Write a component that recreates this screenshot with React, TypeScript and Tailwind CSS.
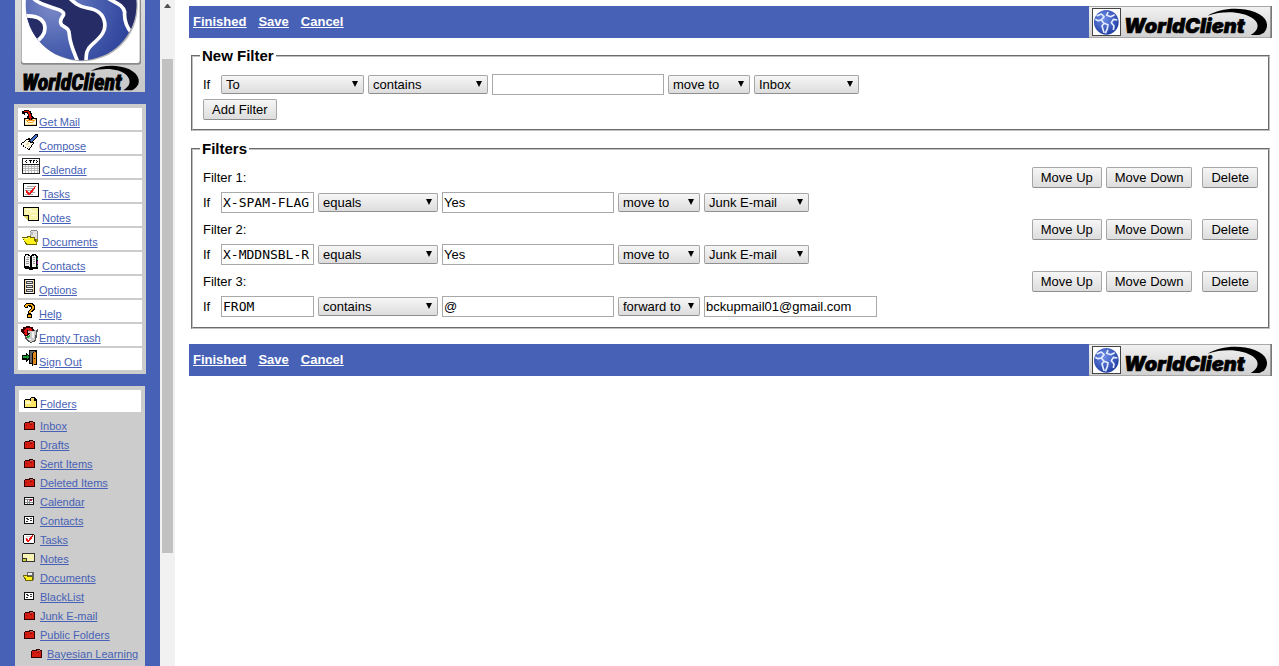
import type { ReactNode } from 'react';

const menuItems = [
  { label: 'Get Mail', icon: 'getmail' },
  { label: 'Compose', icon: 'compose' },
  { label: 'Calendar', icon: 'calendar', wide: true },
  { label: 'Tasks', icon: 'tasks', wide: true },
  { label: 'Notes', icon: 'notes', wide: true },
  { label: 'Documents', icon: 'documents', wide: true },
  { label: 'Contacts', icon: 'contacts', wide: true },
  { label: 'Options', icon: 'options' },
  { label: 'Help', icon: 'help' },
  { label: 'Empty Trash', icon: 'trash' },
  { label: 'Sign Out', icon: 'signout' },
];

const folders = [
  { label: 'Inbox', icon: 'red' },
  { label: 'Drafts', icon: 'red' },
  { label: 'Sent Items', icon: 'red' },
  { label: 'Deleted Items', icon: 'red' },
  { label: 'Calendar', icon: 'calendar' },
  { label: 'Contacts', icon: 'contacts' },
  { label: 'Tasks', icon: 'tasks' },
  { label: 'Notes', icon: 'notes' },
  { label: 'Documents', icon: 'documents' },
  { label: 'BlackList', icon: 'contacts' },
  { label: 'Junk E-mail', icon: 'red' },
  { label: 'Public Folders', icon: 'red' },
  { label: 'Bayesian Learning', icon: 'red', nested: true },
];

const filters = [
  { header: 'X-SPAM-FLAG', test: 'equals', value: 'Yes', action: 'move to', target: 'Junk E-mail' },
  { header: 'X-MDDNSBL-R', test: 'equals', value: 'Yes', action: 'move to', target: 'Junk E-mail' },
  { header: 'FROM', test: 'contains', value: '@', action: 'forward to', target: 'bckupmail01@gmail.com' },
];

const tests = ['contains', 'equals', 'does not contain'];
const actions = ['move to', 'forward to', 'delete'];
const mailFolders = ['Inbox', 'Drafts', 'Sent Items', 'Junk E-mail'];

// 16px menu icons, drawn on a pixel grid
const menuIcons: Record<string, ReactNode> = {
  getmail: (
    <>
      <path d="M3 8h13v8H3z" fill="#000" />
      <path d="M4 9h11v6H4z" fill="#fff8d8" />
      <path d="M4 14h11v1H4z" fill="#ffd890" />
      <path d="M4 9h1v1h1v1h1v1h5v-1h1v-1h1V9h1v1h-1v1h-1v1h-1v1H7v-1H6v-1H5v-1H4z" fill="#f0a830" />
      <path d="M1 1h2V0h5v1h2v2h1v3h1v1h1v2h-1v1h-1v1H9v-1H8V9H7V8H6V6h1V4H6V3H4v2H3V4H1z" fill="#000" />
      <path d="M3 1h5v1h1v2h1v3h1v1h-1v2H9V8H8V4H7V2H3z" fill="#e01000" />
      <path d="M7 9h1v1h3V9h1v1h1v2h-1v-1H7v1H6v-2h1z" fill="#ff9410" />
    </>
  ),
  compose: (
    <>
      <path d="M0 9h1V8h2V7h1V6h1V5h2V4h2v2h2v2h2v2h-1v1h-1v2h-1v1H9v2H7v-1H6v-1H4v-1H2v-2H0z" fill="#000" />
      <path d="M1 9h2V8h1V7h1V6h3v1h2v2h2v1h-1v1h-1v2H9v1H8v1H7v-1H5v-1H3v-2H1z" fill="#fffbe8" />
      <path d="M9 7V5h1V4h1V3h1V2h1V1h1V0h3v3h-1v1h-1v1h-1v1h-1v1h-1v1h-1v1H9V8H7V7z" fill="#000" />
      <path d="M10 6V5h1V4h1V3h1V2h1V1h2v2h-1v1h-1v1h-1v1h-1v1h-1v1h-1V7H9V6z" fill="#3f6fc4" />
      <path d="M6 9h2v1H6zM5 10h2v1H5zM7 12h2v1H7z" fill="#dcd3a0" />
    </>
  ),
  calendar: (
    <>
      <path d="M1 0h18v16H1z" fill="#222" />
      <path d="M2 1h16v5H2zM2 7h16v8H2z" fill="#fff" />
      <path
        d="M4 3h1v1H4zM5 2h1v1H5zM5 4h1v1H5zM8 2h3v1H8zM9 3h1v2H9zM12 2h1v3h-1zM13 2h1v1h-1zM15 2h1v1h-1zM16 3h1v1h-1zM15 4h1v1h-1z"
        fill="#000"
      />
      <path
        d="M2 8h16v1H2zM2 10h16v1H2zM2 12h16v1H2zM4 7h1v8H4zM7 7h1v8H7zM10 7h1v8h-1zM13 7h1v8h-1zM16 7h1v8h-1z"
        fill="#bbb"
      />
    </>
  ),
  tasks: (
    <>
      <path d="M2 1h16v14H2z" fill="#000" />
      <path d="M3 2h14v12H3z" fill="#fff" />
      <path d="M6 4h9v1H6zM4 6h8v1H4zM4 8h9v1H4zM5 10h9v1H5zM4 12h8v1H4z" fill="#aaa" />
      <path d="M5 8l3 4 7-8" fill="none" stroke="#f01818" strokeWidth="1" />
      <path d="M5 9l3 4 6-7" fill="none" stroke="#f01818" strokeWidth="1" />
    </>
  ),
  notes: (
    <>
      <path d="M2 1h16v14H7v-1H3v-1H2z" fill="#000" />
      <path d="M3 2h14v12H8V9H3z" fill="#f7f3a8" />
      <path d="M5 3h6v1H5zM9 5h6v1H9zM10 9h5v1h-5z" fill="#fffde0" />
      <path d="M3 10h4v4H6v-1H5v-1H4v-1H3z" fill="#dcd35a" />
      <path d="M2 10h1v1h1v1h1v1h1v2H2z" fill="#fff" />
    </>
  ),
  documents: (
    <>
      <path d="M9 1h1V0h6v1h1v9H9z" fill="#888" />
      <path d="M10 1h6v9h-6z" fill="#e2e2e2" />
      <path d="M9 2h3v3H9z" fill="#bcbcbc" />
      <path d="M1 7h5V6h4v1h4v2h2v5l-1 1H5L4 13z" fill="#6b6300" />
      <path d="M2 8h5V7h2v1h4v2l2 3v1H6l-2-2z" fill="#fff21c" />
      <path d="M3 8h4v1H4z" fill="#fffca8" />
      <path d="M15 9h2v3h-1v2h-1z" fill="#998a00" />
    </>
  ),
  contacts: (
    <>
      <path d="M4 0h4v1h1v1h1V1h1V0h4v1h1v1h1v13h-5v1H8v-1H4v-1H3V2h1z" fill="#000" />
      <path d="M4 2h1V1h2v1h2v11H8v-1H4zM11 2h2V1h1v1h1v11h-4z" fill="#f0f0f0" />
      <path d="M6 3h2v1H6zM5 5h3v1H5zM5 7h3v1H5zM5 9h3v1H5zM12 3h2v1h-2zM12 5h2v1h-2zM12 7h2v1h-2zM12 9h2v1h-2z" fill="#999" />
      <path d="M16 4h1v2h-1zM16 11h1v2h-1z" fill="#1b9a4b" />
      <path d="M16 7h1v3h-1z" fill="#9b1fa0" />
    </>
  ),
  options: (
    <>
      <path d="M3 1h11v15H3z" fill="#000" />
      <path d="M4 2h9v13H4z" fill="#f2d8a8" />
      <path d="M5 2h7v13H5z" fill="#fff" />
      <path d="M5 3h7v3H5zM5 7h7v3H5zM5 11h7v3H5z" fill="#444" />
      <path d="M6 4h5v1H6zM6 8h5v1H6zM6 12h5v1H6z" fill="#ddd" />
    </>
  ),
  help: (
    <>
      <path d="M5 1h7v1h1v1h1v5h-1v1h-1v1h-2v2h1v4H6v-4h1V9h1V8h1V7h1V5H8V4H7v2H4V5H3V3h1V2h1z" fill="#000" />
      <path d="M5 2h6v1h1v1h1v3h-1v1h-1v1h-1v2H8V9h1V8h1V7h1V4h-1V3H7v1H6v1H4V3h1z" fill="#ffae18" />
      <path d="M7 13h3v2H7z" fill="#ffae18" />
    </>
  ),
  trash: (
    <>
      <path d="M5 4h9l3-1-2 12-5 2-5-3L3 8z" fill="#555" />
      <path d="M6 5h7l2-1-1 10-4 2-4-3-1-5z" fill="#c9c9c9" />
      <path d="M11 6h2v6h-2zM7 13h3v1H7z" fill="#f4f4f4" />
      <path d="M0 3h2V1h3V0h4v1h3v2h1v2h-3V4H7v3h2v1H8v1H7v1H4V9H3V8H2V7H1V6H0z" fill="#300" />
      <path d="M2 5l3-3h4l2 2v1H9L6 4v4h1L5 9 2 7h2z" fill="#e41414" />
      <path d="M6 10h2v2H6zM8 9h1v2H8z" fill="#1aa83a" />
    </>
  ),
  signout: (
    <>
      <path d="M8 0h8v15h-4v1h-1v-2H8z" fill="#000" />
      <path d="M9 1h5v1h-2v1h-1v10H9z" fill="#666" />
      <path d="M12 3h1V2h2v12h-2v1h-1z" fill="#e08a1c" />
      <path d="M13 8h1v1h-1z" fill="#000" />
      <path d="M1 5h4V3h1v1h1v1h1v1h1v3H8v1H7v1H6v1H5v-2H1z" fill="#000" />
      <path d="M2 6h4V5h1v1h1v2H7v1H6V8H2z" fill="#1e9a2e" />
    </>
  ),
};

const folderIcons: Record<string, ReactNode> = {
  open: (
    <>
      <path d="M2 5h1V4h5V3h1V2h4v1h1v1h1v9H2z" fill="#000" />
      <path d="M3 5h5v1h6v6H3z" fill="#ffe566" />
      <path d="M3 6h6v3H3z" fill="#fff7b8" />
      <path d="M9 3h3v3H9z" fill="#ffd65c" />
    </>
  ),
  red: (
    <>
      <path d="M2 6h1V5h4V4h4v1h2v8H2z" fill="#300" />
      <path d="M3 6h9v6H3z" fill="#d41c10" />
      <path d="M8 5h3v1H8z" fill="#a86860" />
      <path d="M4 8h1v1H4zM8 7h2v1H8z" fill="#8c0c08" />
    </>
  ),
  calendar: (
    <>
      <path d="M2 4h10v8H2z" fill="#111" />
      <path d="M3 5h8v6H3z" fill="#fff" />
      <path d="M3 6h8v1H3zM3 9h8v1H3zM5 6h1v5H5zM7 6h1v5H7z" fill="#888" />
      <path d="M8 6h2v2H8z" fill="#a02040" />
    </>
  ),
  contacts: (
    <>
      <path d="M2 4h10v8H2z" fill="#111" />
      <path d="M3 5h8v6H3z" fill="#fff" />
      <path d="M4 6h2v1H4zM4 9h2v1H4zM5 7h2v1H5zM8 6h2v1H8zM8 8h2v1H8z" fill="#333" />
    </>
  ),
  tasks: (
    <>
      <path d="M2 3h10v1h1v8h-1v1H2v-1H1V4h1z" fill="#111" />
      <path d="M2 4h10v8H2z" fill="#fff" />
      <path d="M4 5h5v1H4zM3 7h3v1H3z" fill="#ccc" />
      <path d="M4 7l2 3 5-6" fill="none" stroke="#f01818" strokeWidth="1" />
      <path d="M4 8l2 3 5-6" fill="none" stroke="#f01818" strokeWidth="1" />
    </>
  ),
  notes: (
    <>
      <path d="M0 3h13v9H0z" fill="#333" />
      <path d="M1 4h11v7H5V8H1z" fill="#f6f3b4" />
      <path d="M1 9h3v2H1z" fill="#d8ce30" />
    </>
  ),
  documents: (
    <>
      <path d="M5 3h6l1 1v7H5z" fill="#666" />
      <path d="M6 4h4v2H6z" fill="#eee" />
      <path d="M1 6h5v1h4v1h1v4H3V10H2V8H1z" fill="#6b6300" />
      <path d="M2 7h3v1h5v3H4V9H3V8H2z" fill="#fff21c" />
    </>
  ),
};

function FolderIcon({ name }: { name: string }) {
  return (
    <svg width="18" height="16" viewBox="0 0 18 16" shapeRendering="crispEdges" className="shrink-0" aria-hidden="true">
      {folderIcons[name]}
    </svg>
  );
}

function SidebarLogo() {
  return (
    <svg width="130" height="92" viewBox="45 0 390 276" className="block shrink-0 overflow-visible" role="img" aria-label="WorldClient">
      <defs>
        <linearGradient id="plate" x1="0" y1="0" x2="0" y2="1">
          <stop offset="0" stopColor="#dcdcdc" />
          <stop offset="1" stopColor="#c8c8c8" />
        </linearGradient>
        <radialGradient id="globe" cx="0.25" cy="0.5" r="0.75">
          <stop offset="0" stopColor="#7c8ac8" />
          <stop offset="0.5" stopColor="#4c62b0" />
          <stop offset="1" stopColor="#2c419a" />
        </radialGradient>
        <clipPath id="disc">
          <circle cx="243" cy="15" r="166" />
        </clipPath>
      </defs>
      <rect x="45" y="0" width="390" height="276" fill="url(#plate)" />
      <rect x="63" y="-20" width="360" height="214" rx="8" fill="#8a8a8a" />
      <rect x="65" y="-20" width="354" height="209" rx="7" fill="#fff" />
      <circle cx="247" cy="18" r="166" fill="#b4b4b4" />
      <circle cx="243" cy="15" r="166" fill="url(#globe)" />
      <g clipPath="url(#disc)" fill="#252c66" stroke="#fff" strokeWidth="11" strokeLinejoin="round">
        <path d="M92 -14C108 8 132 14 160 24C180 30 194 34 190 46C182 58 178 66 186 76C198 84 208 86 208 104C210 134 222 156 236 192L258 192C258 158 260 148 276 134C306 108 318 92 314 68C310 42 290 28 262 24C236 20 222 8 200 -14Z" />
        <path d="M66 48C96 46 122 48 132 70C140 92 130 112 104 128Z" />
        <path d="M312 -14C336 8 368 8 374 36C372 62 378 80 396 100L430 60L420 -14Z" />
      </g>
      <text
        x="66"
        y="269"
        fontSize="66"
        fontWeight="700"
        fontStyle="italic"
        stroke="#000"
        strokeWidth="3"
        fontFamily="'Liberation Sans Narrow', 'Roboto Condensed', 'Liberation Sans', sans-serif"
      >
        WorldClient
      </text>
      <path d="M272 213C305 194 352 192 388 208C420 224 426 252 402 268L396 271H370C392 258 394 242 380 226C360 206 318 202 272 213Z" />
    </svg>
  );
}

function BannerLogo() {
  return (
    <svg width="183" height="32" viewBox="27 18 549 96" className="block shrink-0 overflow-visible" role="img" aria-label="WorldClient">
      <defs>
        <linearGradient id="banner" x1="0" y1="0" x2="0" y2="1">
          <stop offset="0" stopColor="#f2f2f2" />
          <stop offset="1" stopColor="#cfcfcf" />
        </linearGradient>
        <radialGradient id="mini" cx="0.4" cy="0.35" r="0.7">
          <stop offset="0" stopColor="#6f8fe8" />
          <stop offset="1" stopColor="#1d3aa0" />
        </radialGradient>
      </defs>
      <rect x="27" y="18" width="549" height="96" fill="url(#banner)" />
      <path d="M27 19.5H574.5V112.5H27" fill="none" stroke="#a8a8a8" strokeWidth="3" />
      <path d="M571 18h5v96h-5z" fill="#777" />
      <rect x="37.5" y="25.5" width="84" height="81" fill="#fff" stroke="#444" strokeWidth="3" />
      <circle cx="79" cy="67" r="37" fill="url(#mini)" />
      <path
        d="M50 48L64 42L72 50L64 60L72 70L84 74L82 86L76 100M64 60L54 62L46 58M84 36L80 46L92 50L104 44M112 60L100 58L94 68L102 78L100 90M72 70L66 78L72 98"
        fill="none"
        stroke="#e4ebff"
        strokeWidth="5"
        strokeLinejoin="round"
      />
      <text
        x="132"
        y="98"
        fontSize="60"
        fontWeight="900"
        fontStyle="italic"
        stroke="#000"
        strokeWidth="2"
        fontFamily="Inter, 'Liberation Sans', sans-serif"
      >
        WorldClient
      </text>
      <path d="M383 47C420 24 480 20 524 36C562 50 570 78 552 98L538 105H512C536 90 540 72 520 56C490 34 432 30 383 47Z" />
    </svg>
  );
}

function Toolbar() {
  return (
    <nav className="flex h-8 items-center justify-between bg-[#4661b5]">
      <div className="flex gap-3 pl-1 text-[13px] leading-4 font-bold text-white underline">
        <a href="#finished">Finished</a>
        <a href="#save">Save</a>
        <a href="#cancel">Cancel</a>
      </div>
      <BannerLogo />
    </nav>
  );
}

function Select({ label, value, options, width }: { label: string; value: string; options: string[]; width: string }) {
  return (
    <span className={`relative flex ${width}`}>
      <select
        aria-label={label}
        defaultValue={value}
        className="h-[19px] w-full appearance-none rounded-[2px] border border-[#a6a6a6] border-b-[#8f8f8f] bg-linear-to-b from-[#f6f6f6] to-[#dddddd] pl-1 leading-4"
      >
        {options.map(o => (
          <option key={o}>{o}</option>
        ))}
      </select>
      <svg width="6" height="6" viewBox="0 0 6 6" className="pointer-events-none absolute top-1.5 right-1.5" aria-hidden="true">
        <path d="M0 0h6L3 6z" />
      </svg>
    </span>
  );
}

function Button({ children }: { children: ReactNode }) {
  return (
    <button
      type="button"
      className="h-[21px] rounded-[2px] border border-[#a6a6a6] border-b-[#8f8f8f] bg-linear-to-b from-[#f6f6f6] to-[#dddddd] px-2 leading-4 whitespace-nowrap"
    >
      {children}
    </button>
  );
}

const inputClass = 'h-[21px] border border-[#a9a9a9] bg-white px-px leading-4';

function Sidebar() {
  return (
    <aside className="flex w-40 shrink-0 flex-col items-center overflow-hidden bg-[#4661b5] text-[11px] leading-3 text-[#4661b5]">
      <SidebarLogo />
      <nav className="mt-3 flex w-33 shrink-0 flex-col gap-0.5 border-4 border-[#cccccc] bg-[#cccccc]">
        {menuItems.map(item => (
          <div key={item.label} className="flex h-[22px] items-start bg-white pt-0.5 pl-[3px]">
            <svg
              width={item.wide ? 21 : 18}
              height="18"
              viewBox={item.wide ? '0 0 21 18' : '0 0 18 18'}
              shapeRendering="crispEdges"
              className="shrink-0"
              aria-hidden="true"
            >
              {menuIcons[item.icon]}
            </svg>
            <a href="#menu" className="mt-1.5 underline">{item.label}</a>
          </div>
        ))}
      </nav>
      <nav className="mt-3 flex w-[130px] shrink-0 grow flex-col border-4 border-[#cccccc] bg-[#cccccc]">
        <div className="mb-[5px] flex h-[22px] items-center bg-white pt-1 pl-[3px]">
          <FolderIcon name="open" />
          <a href="#folders" className="pt-0.5 underline">Folders</a>
        </div>
        {folders.map(f => (
          <div key={f.label} className={`flex h-[19px] shrink-0 items-start ${f.nested ? 'pl-2.5' : 'pl-[3px]'}`}>
            <FolderIcon name={f.icon} />
            <a href="#folder" className="mt-[3px] whitespace-nowrap underline">{f.label}</a>
          </div>
        ))}
      </nav>
    </aside>
  );
}

function Scrollbar() {
  return (
    <div className="flex w-[15px] shrink-0 flex-col items-center bg-[#f1f1f1]" aria-hidden="true">
      <svg width="7" height="17" viewBox="0 0 7 17" className="shrink-0">
        <path d="M0 8L3 4h1l3 4z" fill="#505050" />
      </svg>
      <div className="grow-42" />
      <div className="w-[11px] grow-494 bg-[#c1c1c1]" />
      <div className="grow-113" />
    </div>
  );
}

export default function App() {
  return (
    <div className="flex h-screen bg-white font-['Liberation_Sans',Arial,sans-serif] text-[13px] leading-4 text-black">
      <Sidebar />
      <Scrollbar />
      <main className="min-w-0 grow overflow-hidden pt-1.5 pr-[7px] pl-3.5">
        <Toolbar />

        <fieldset className="mx-0.5 mt-[9px] border-2 border-[#c0c0c0] px-[7px] pb-[9px] [border-style:groove]">
          <legend className="px-0.5 text-[15px] leading-[17px] font-bold">New Filter</legend>
          <div className="flex flex-col items-start gap-1 px-[3px] pt-[10px]">
            <div className="flex items-center gap-1">
              <label htmlFor="new-value" className="w-3.5">If</label>
              <Select label="Header" value="To" options={['To', 'From', 'Subject']} width="w-[143px]" />
              <Select label="Test" value="contains" options={tests} width="w-[120px]" />
              <input id="new-value" type="text" className={`${inputClass} w-[172px]`} />
              <Select label="Action" value="move to" options={actions} width="w-[82px]" />
              <Select label="Folder" value="Inbox" options={mailFolders} width="w-[105px]" />
            </div>
            <Button>Add Filter</Button>
          </div>
        </fieldset>

        <fieldset className="mx-0.5 mt-[9px] border-2 border-[#c0c0c0] px-[7px] pb-[10px] [border-style:groove]">
          <legend className="px-0.5 text-[15px] leading-[17px] font-bold">Filters</legend>
          <div className="flex flex-col gap-1.5 px-[3px] pt-[10px]">
            {filters.map((f, i) => (
              <div key={f.header} className="flex flex-col gap-1">
                <div className="flex items-center gap-1">
                  <span className="grow">Filter {i + 1}:</span>
                  <Button>Move Up</Button>
                  <Button>Move Down</Button>
                  <span className="pl-1.5"><Button>Delete</Button></span>
                </div>
                <div className="flex items-center gap-1">
                  <label htmlFor={`header-${i}`} className="w-3.5">If</label>
                  <input
                    id={`header-${i}`}
                    type="text"
                    defaultValue={f.header}
                    className={`${inputClass} w-[93px] font-['DejaVu_Sans_Mono',monospace]`}
                  />
                  <Select label="Test" value={f.test} options={tests} width="w-[120px]" />
                  <input type="text" aria-label="Value" defaultValue={f.value} className={`${inputClass} w-[172px]`} />
                  <Select label="Action" value={f.action} options={actions} width="w-[82px]" />
                  {f.action === 'forward to' ? (
                    <input type="text" aria-label="Forward address" defaultValue={f.target} className={`${inputClass} w-[173px]`} />
                  ) : (
                    <Select label="Folder" value={f.target} options={mailFolders} width="w-[105px]" />
                  )}
                </div>
              </div>
            ))}
          </div>
        </fieldset>

        <div className="mt-[15px]">
          <Toolbar />
        </div>
      </main>
    </div>
  );
}
